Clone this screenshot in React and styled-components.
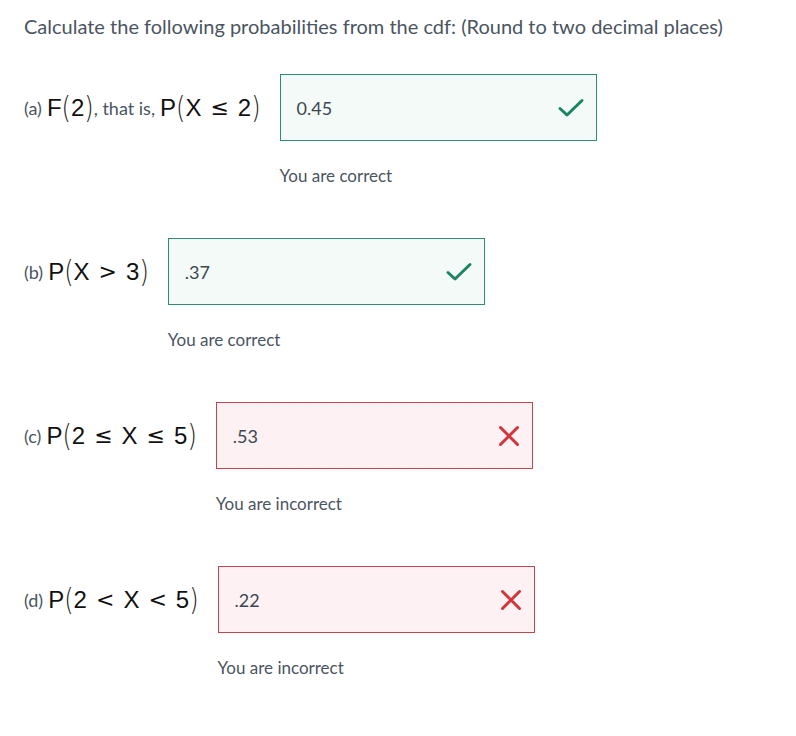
import React from "react";
import styled, { createGlobalStyle } from "styled-components";

const Global = createGlobalStyle`
  html, body { margin: 0; padding: 0; background: #ffffff; }
  body { font-family: "Lato", "Noto Sans", sans-serif; color: #4a5561; }
`;

const Page = styled.div`
  padding: 12px 24px 0 24px;
`;

const Title = styled.h1`
  margin: 0 0 34px 0;
  font-size: 20px;
  line-height: 28px;
  font-weight: 400;
  color: #4a5561;
`;

const Block = styled.div`
  display: flex;
  align-items: flex-start;
  gap: 19px;
  margin-bottom: 51px;
  &:last-child { margin-bottom: 0; }
`;

const Label = styled.div`
  height: 67px;
  display: flex;
  align-items: center;
  white-space: nowrap;
  font-size: 18px;
  color: #4a5561;
`;

const Math = styled.span`
  font-family: "Liberation Sans", "Noto Sans", sans-serif;
  font-size: 24px;
  color: #111;
  margin: 0 0 0 5px;
  display: inline-flex;
  align-items: center;
`;

const Paren = styled.span`
  font-family: "DejaVu Sans", sans-serif;
  font-weight: 200;
  display: inline-block;
  transform: scaleY(1.25);
  color: #222;
`;

const Rel = styled.span`
  font-family: "DejaVu Sans", sans-serif;
  font-size: 22px;
  margin: 0 9px;
`;

const Column = styled.div`
  display: flex;
  flex-direction: column;
`;

const Box = styled.div`
  box-sizing: border-box;
  width: 317px;
  height: 67px;
  display: flex;
  align-items: center;
  justify-content: space-between;
  padding: 0 11px 0 16px;
  border: 1px solid ${(p) => (p.$ok ? "#2e8c74" : "#c0464e")};
  background: ${(p) => (p.$ok ? "#f4faf8" : "#fdf1f3")};
  font-family: "Lato", sans-serif;
  font-size: 18px;
  color: #3d4650;
`;

const Feedback = styled.div`
  margin-top: 24px;
  font-size: 17px;
  line-height: 22px;
  color: #4a5561;
`;

const Check = () => (
  <svg width="28" height="22" viewBox="0 0 28 22">
    <path d="M3 11.5 L10 18 L25 3.5" fill="none" stroke="#1b8560" strokeWidth="3" strokeLinecap="round" strokeLinejoin="round" />
  </svg>
);

const Cross = () => (
  <svg width="24" height="24" viewBox="0 0 24 24">
    <path d="M3.5 3.5 L20.5 20.5 M20.5 3.5 L3.5 20.5" fill="none" stroke="#d2343c" strokeWidth="3" strokeLinecap="round" />
  </svg>
);

const P = ({ children }) => (
  <>
    <Paren>(</Paren>
    {children}
    <Paren>)</Paren>
  </>
);

const questions = [
  {
    id: "a",
    label: (
      <>
        (a)
        <Math>F<P>2</P></Math>, that is,
        <Math>P<P>X<Rel>≤</Rel>2</P></Math>
      </>
    ),
    value: "0.45",
    ok: true,
  },
  {
    id: "b",
    label: (
      <>
        (b)
        <Math>P<P>X<Rel>&gt;</Rel>3</P></Math>
      </>
    ),
    value: ".37",
    ok: true,
  },
  {
    id: "c",
    label: (
      <>
        (c)
        <Math>P<P>2<Rel>≤</Rel>X<Rel>≤</Rel>5</P></Math>
      </>
    ),
    value: ".53",
    ok: false,
  },
  {
    id: "d",
    label: (
      <>
        (d)
        <Math>P<P>2<Rel>&lt;</Rel>X<Rel>&lt;</Rel>5</P></Math>
      </>
    ),
    value: ".22",
    ok: false,
  },
];

export default function App() {
  return (
    <>
      <Global />
      <Page>
        <Title>Calculate the following probabilities from the cdf: (Round to two decimal places)</Title>
        {questions.map((q) => (
          <Block key={q.id}>
            <Label>{q.label}</Label>
            <Column>
              <Box $ok={q.ok}>
                <span>{q.value}</span>
                {q.ok ? <Check /> : <Cross />}
              </Box>
              <Feedback>{q.ok ? "You are correct" : "You are incorrect"}</Feedback>
            </Column>
          </Block>
        ))}
      </Page>
    </>
  );
}
